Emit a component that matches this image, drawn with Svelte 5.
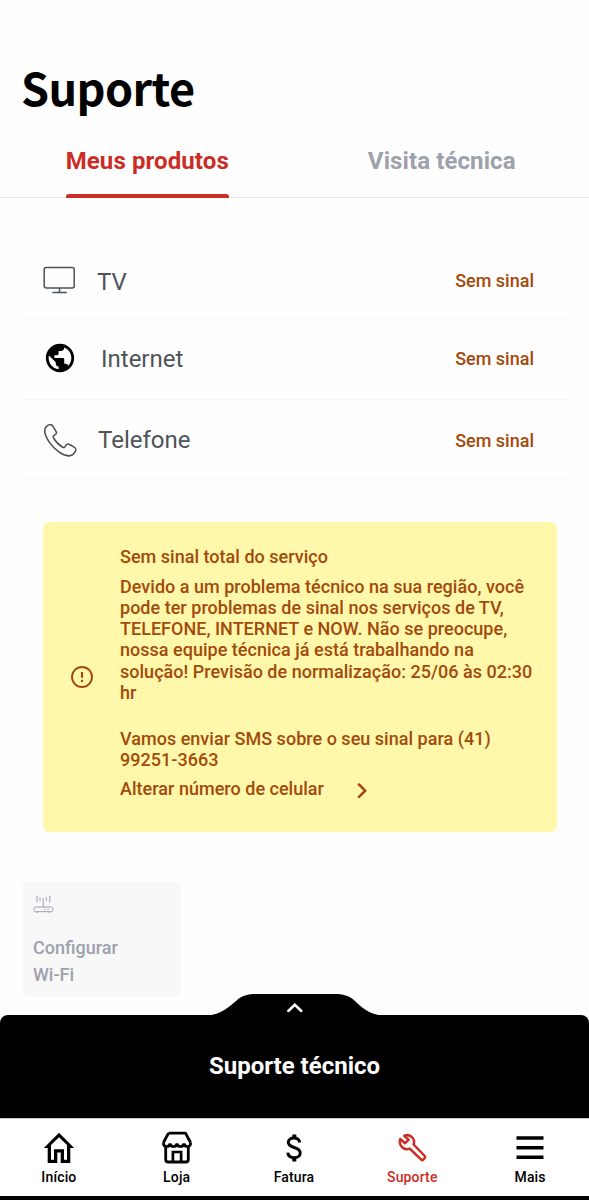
<script>
  const services = [
    { id: 'tv', label: 'TV', status: 'Sem sinal' },
    { id: 'internet', label: 'Internet', status: 'Sem sinal' },
    { id: 'phone', label: 'Telefone', status: 'Sem sinal' }
  ];

  const navItems = [
    { id: 'home', label: 'Início' },
    { id: 'store', label: 'Loja' },
    { id: 'bill', label: 'Fatura' },
    { id: 'support', label: 'Suporte' },
    { id: 'more', label: 'Mais' }
  ];

  let activeTab = $state('products');
  let activeNav = $state('support');
</script>

<div class="screen">
  <header class="header">
    <h1>Suporte</h1>
    <div class="tabs">
      <button class="tab" class:active={activeTab === 'products'} onclick={() => (activeTab = 'products')}>
        <span>Meus produtos</span>
      </button>
      <button class="tab" class:active={activeTab === 'visit'} onclick={() => (activeTab = 'visit')}>
        <span>Visita técnica</span>
      </button>
    </div>
  </header>

  <main class="content">
    <ul class="services">
      {#each services as service (service.id)}
        <li class="service service--{service.id}">
          {#if service.id === 'tv'}
            <svg width="34" height="30" viewBox="0 0 34 30" fill="none" stroke="#4b4f57" stroke-width="1.5">
              <rect x="1.2" y="1.4" width="30" height="20.5" rx="2" />
              <path d="M16.5 21.9v4.6M9.3 26.6h14.5" />
            </svg>
          {:else if service.id === 'internet'}
            <svg width="34" height="34" viewBox="0 0 24 24" fill="#000">
              <path d="M12 2C6.48 2 2 6.48 2 12s4.48 10 10 10 10-4.48 10-10S17.52 2 12 2zm-1 17.93c-3.95-.49-7-3.85-7-7.93 0-.62.08-1.21.21-1.79L9 15v1c0 1.1.9 2 2 2v1.93zm6.9-2.54c-.26-.81-1-1.39-1.9-1.39h-1v-3c0-.55-.45-1-1-1H8v-2h2c.55 0 1-.45 1-1V7h2c1.1 0 2-.9 2-2v-.41c2.93 1.19 5 4.06 5 7.41 0 2.08-.8 3.97-2.1 5.39z" />
            </svg>
          {:else}
            <svg width="35" height="35" viewBox="0 0 36 36" fill="none" stroke="#4b4f57" stroke-width="1.6" stroke-linejoin="round">
              <path d="M3.1 4.2C4.4 2.7 6.4 1.6 7.8 1.6c1.2 0 1.9.9 2.6 2.1l3.1 5.1c.8 1.5.2 2.7-1.4 3.4-1.6.8-2 1.6-1.3 3 2.2 4 5.400 7.200 9.100 9.500 1.600 1 2.400.5 3.200-.9 1-2.200 2.200-2.800 4.300-1.700l4.600 2.800c2.400 1.500 2.400 2.400 1.100 4.600-1.500 2.600-4 4.400-6.800 4.300C20 33.300 12.200 27.500 7.200 20.700 3.400 15.400 1.500 10.400 1.800 7.200c.1-1.200.6-2.200 1.300-3z" />
            </svg>
          {/if}
          <span class="service__name">{service.label}</span>
          <span class="service__status">{service.status}</span>
        </li>
      {/each}
    </ul>

    <section class="alert">
      <svg class="alert__icon" width="24" height="24" viewBox="0 0 24 24" fill="none" stroke="#a24a0c" stroke-width="1.9">
        <circle cx="12" cy="12" r="10" />
        <path d="M12 7v5.800M12 14.700v2.200" stroke-width="2.100" />
      </svg>
      <div class="alert__copy">
        <p class="alert__title">Sem sinal total do serviço</p>
        <p class="alert__text">
          Devido a um problema técnico na sua região, você<br />
          pode ter problemas de sinal nos serviços de TV,<br />
          TELEFONE, INTERNET e NOW. Não se preocupe,<br />
          nossa equipe técnica já está trabalhando na<br />
          solução! Previsão de normalização: 25/06 às 02:30<br />
          hr
        </p>
        <p class="alert__sms">Vamos enviar SMS sobre o seu sinal para (41)<br />99251-3663</p>
        <p class="alert__link">
          <span>Alterar número de celular</span>
          <svg width="12" height="18" viewBox="0 0 12 18" fill="none" stroke="#a24a0c" stroke-width="2.500" stroke-linecap="round">
            <path d="M3 4.500l6.200 6.200L3 16.900" />
          </svg>
        </p>
      </div>
    </section>

    <article class="shortcut">
      <svg width="21" height="20" viewBox="0 0 21 20" fill="none" stroke="#9ea1ad" stroke-width="1">
        <rect x="1" y="13" width="18.800" height="4.700" rx="1.500" />
        <path d="M10.200 4v9M4 2v6.500M7 3.500v3.500M13.400 3.500v3.500M16.800 2v6.500M4 17.700v1.300M16.500 17.700v1.300" />
        <path d="M11.500 15.400h1.200M14.500 15.400h1.200" stroke-width="1.300" />
      </svg>
      <span>Configurar<br />Wi-Fi</span>
    </article>
  </main>

  <section class="sheet">
    <svg class="sheet__handle" width="180" height="24" viewBox="0 0 180 24">
      <path d="M0 23C16 21 23 14 30 8C36 2.500 42 1 50 1H128C137 1 143 2.500 149 8C155 14 162 21 178 23V24H0Z" fill="#000" />
      <path d="M82.300 18l6.500-6.200 6.500 6.200" fill="none" stroke="#fff" stroke-width="2.500" stroke-linecap="round" />
    </svg>
    <h2>Suporte técnico</h2>
  </section>

  <nav class="nav">
    {#each navItems as item (item.id)}
      <button class="nav__item nav__item--{item.id}" class:active={activeNav === item.id} onclick={() => (activeNav = item.id)}>
        <svg width="34" height="34" viewBox="0 0 34 34" fill="none" stroke="currentColor" stroke-width="3">
          {#if item.id === 'home'}
            <path d="M1.800 17L17 1.800 32.200 17H28.300V32H18.700V21.500H15.300V32H5.700V17ZM9 14V28.700H12V18.200H22V28.700H25V14L17 6.300Z" fill="currentColor" fill-rule="evenodd" stroke="none" />
          {:else if item.id === 'store'}
            <path d="M8.500 2.200H25.500L30.500 11.500M8.500 2.200L3.500 11.500M5.700 15V28.500q0 2.500 2.500 2.500H25.800q2.500 0 2.500-2.500V15" stroke-width="2.800" stroke-linejoin="round" />
            <path d="M3.300 11.500q0 4 3.200 4t3.500-3q.4 3 3.500 3t3.500-3q.4 3 3.500 3t3.500-3q.4 3 3.500 3t3.200-4M12.900 31V21H21.100V31" stroke-width="2.700" />
          {:else if item.id === 'bill'}
            <path d="M22.700 11.500C22.200 8.500 20 7 17 7c-3.400 0-5.700 1.700-5.700 4.300 0 3 2.700 4.200 5.900 5.200 3.600 1.100 6 2.300 6 5.500 0 2.900-2.500 4.700-5.900 4.700-3.600 0-6.200-1.900-6.500-5" />
            <path d="M17.300 3.500v4M17.300 26.500v4" stroke-width="4" />
          {:else if item.id === 'support'}
            <path d="M5.300 8l4.700 4.200 3.600-3.400L9.200 4.900C12 3.700 15.300 4.200 17.300 6.500c1.900 2.100 2.200 4.700 1.300 7L29.700 25q.9 1 0 2.100l-1.500 1.600q-1 .8-2 0L14.800 17.700C12 18.800 9.200 18.100 7.200 16.300 4.900 14 4.300 10.900 5.300 8Z" stroke-width="2.500" stroke-linejoin="round" />
          {:else}
            <path d="M3.500 7h27M3.500 16.700h27M3.500 26.200h27" stroke-width="3.600" />
          {/if}
        </svg>
        <span>{item.label}</span>
      </button>
    {/each}
  </nav>
</div>

<style>
  :global(body) {
    background: #fefefe;
  }

  .screen {
    display: flex;
    flex-direction: column;
    height: 1200px;
    overflow: hidden;
    background: #fefefe;
    font-family: Roboto, 'Liberation Sans', sans-serif;
  }

  .screen :global(*) {
    box-sizing: border-box;
  }

  h1, h2, p, ul {
    margin: 0;
    padding: 0;
  }

  svg {
    display: block;
    flex: none;
  }

  button {
    padding: 0;
    border: 0;
    background: none;
    font: inherit;
  }

  .header {
    flex: none;
    height: 198px;
    padding-top: 54px;
    border-bottom: 1px solid #e6e6e8;
  }

  h1 {
    height: 69px;
    padding-left: 21px;
    color: #000;
    font: 700 45px/66px 'Noto Sans CJK SC', 'Noto Sans', sans-serif;
    letter-spacing: -0.6px;
  }

  .tabs {
    display: grid;
    grid-template-columns: 1fr 1fr;
    height: 75px;
  }

  .tab {
    display: flex;
    justify-content: center;
    color: #9da1ac;
    font-size: 24px;
    font-weight: 700;
    letter-spacing: 0.1px;
  }

  .tab span {
    height: 75px;
    line-height: 76px;
    white-space: nowrap;
  }

  .tab.active span::after {
    display: block;
    height: 4px;
    margin-top: -5px;
    border-radius: 3px 3px 0 0;
    background: #cb2d25;
    content: '';
  }

  .tab.active span {
    color: #cb2d25;
  }

  .content {
    display: flex;
    flex: 1;
    flex-direction: column;
    padding: 43px 22px 0;
  }

  .services {
    list-style: none;
  }

  .service {
    display: flex;
    align-items: center;
    height: 78px;
    padding: 2px 33px 0 21px;
    border-bottom: 1px solid #f5f5f6;
  }

  .service--internet {
    height: 81px;
    padding-top: 0;
    padding-bottom: 2px;
  }

  .service--phone {
    height: 79px;
  }

  .service__name {
    margin-left: 20px;
    color: #4e525a;
    font-size: 24px;
    line-height: 32px;
  }

  .service--tv .service__name {
    padding-top: 2px;
  }

  .service--internet .service__name {
    margin-left: 24px;
    padding-top: 2px;
  }

  .service__status {
    margin-left: auto;
    color: #a24a0c;
    font-size: 18px;
    font-weight: 500;
  }

  .alert {
    display: flex;
    align-items: center;
    height: 310px;
    margin: 43px 10px 0 21px;
    padding-left: 27px;
    border-radius: 7px;
    background: #fff8ab;
    color: #a24a0c;
    font-size: 18px;
    font-weight: 500;
    letter-spacing: 0.02px;
    line-height: 21.2px;
  }

  .alert__copy {
    margin-left: 26px;
    padding-bottom: 8px;
    white-space: nowrap;
  }

  .alert__text {
    margin-top: 8px;
  }

  .alert__sms {
    margin-top: 25px;
  }

  .alert__link {
    display: flex;
    align-items: center;
    gap: 32px;
    margin-top: 8px;
  }

  .shortcut {
    display: flex;
    flex-direction: column;
    gap: 20px;
    width: 159px;
    height: 115px;
    margin-top: 50px;
    padding: 12px 11px;
    border-radius: 6px;
    background: #f8f8f8;
    color: #9ea1ad;
    font-size: 18px;
    font-weight: 500;
    line-height: 27px;
  }

  .sheet {
    position: relative;
    display: grid;
    flex: none;
    height: 103px;
    padding-bottom: 2px;
    place-items: center;
    border-radius: 8px 8px 0 0;
    background: #000;
    color: #fff;
  }

  .sheet__handle {
    position: absolute;
    top: -22px;
    left: 206px;
  }

  h2 {
    font-size: 24px;
    font-weight: 700;
    line-height: 32px;
  }

  .nav {
    display: grid;
    flex: none;
    grid-template-columns: repeat(5, 1fr);
    height: 82px;
    border-top: 1px solid #c9c9c9;
    border-bottom: 4px solid #000;
    background: #fff;
  }

  .nav__item {
    display: flex;
    flex-direction: column;
    align-items: center;
    padding-top: 12px;
    color: #000;
    font-size: 14px;
    font-weight: 500;
    letter-spacing: 0.15px;
    line-height: 24px;
  }

  .nav__item--bill {
    padding-right: 1px;
  }

  .nav__item.active {
    color: #cb2d25;
  }
</style>
